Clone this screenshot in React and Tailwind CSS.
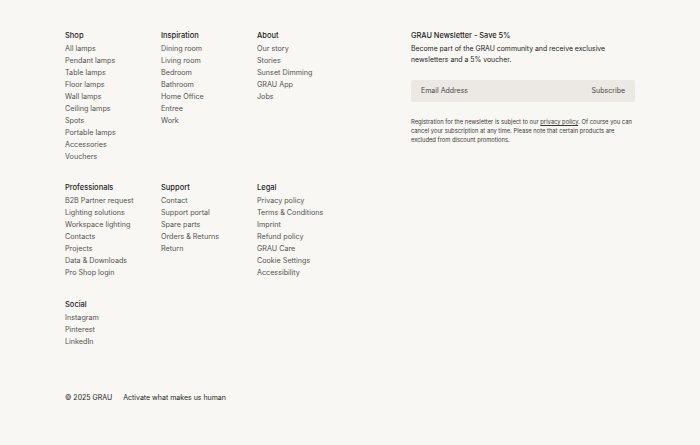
import React from "react";

const sections = [
  [
    {
      title: "Shop",
      links: [
        "All lamps",
        "Pendant lamps",
        "Table lamps",
        "Floor lamps",
        "Wall lamps",
        "Ceiling lamps",
        "Spots",
        "Portable lamps",
        "Accessories",
        "Vouchers",
      ],
    },
    {
      title: "Inspiration",
      links: ["Dining room", "Living room", "Bedroom", "Bathroom", "Home Office", "Entree", "Work"],
    },
    {
      title: "About",
      links: ["Our story", "Stories", "Sunset Dimming", "GRAU App", "Jobs"],
    },
  ],
  [
    {
      title: "Professionals",
      links: [
        "B2B Partner request",
        "Lighting solutions",
        "Workspace lighting",
        "Contacts",
        "Projects",
        "Data & Downloads",
        "Pro Shop login",
      ],
    },
    {
      title: "Support",
      links: ["Contact", "Support portal", "Spare parts", "Orders & Returns", "Return"],
    },
    {
      title: "Legal",
      links: [
        "Privacy policy",
        "Terms & Conditions",
        "Imprint",
        "Refund policy",
        "GRAU Care",
        "Cookie Settings",
        "Accessibility",
      ],
    },
  ],
  [
    {
      title: "Social",
      links: ["Instagram", "Pinterest", "LinkedIn"],
    },
  ],
];

function LinkColumn({ title, links }) {
  return (
    <div className="flex flex-col">
      <h3 className="text-[7.5px] leading-[12px] font-medium text-[#1d1d1b] mb-px">{title}</h3>
      <ul className="flex flex-col">
        {links.map((l) => (
          <li key={l} className="text-[7.2px] leading-[12px] text-[#555350]">
            <a href="#">{l}</a>
          </li>
        ))}
      </ul>
    </div>
  );
}

export default function App() {
  return (
    <footer
      className="min-h-screen w-full bg-[#f8f7f3] px-[65px] pt-[30px]"
      style={{ fontFamily: "Inter, 'Noto Sans', sans-serif" }}
    >
      <div className="flex">
        {/* LINK GROUPS */}
        <div className="flex flex-col gap-[19px] w-[288px]">
          {sections.map((row, i) => (
            <div key={i} className={`grid grid-cols-3 ${i === 2 ? "mt-px" : ""}`}>
              {row.map((col) => (
                <LinkColumn key={col.title} {...col} />
              ))}
            </div>
          ))}
        </div>

        {/* NEWSLETTER */}
        <div className="ml-[58px] w-[224px] flex flex-col">
          <h3 className="text-[7.4px] leading-[12px] font-medium text-[#1d1d1b]">
            GRAU Newsletter - Save 5%
          </h3>
          <p className="text-[6.9px] leading-[11px] text-[#1d1d1b] mt-px">
            Become part of the GRAU community and receive exclusive newsletters and a 5% voucher.
          </p>
          <form className="mt-[15px] flex items-center justify-between h-[22px] bg-[#ece8e4] rounded-[2px] px-[10px]">
            <input
              type="email"
              placeholder="Email Address"
              className="bg-transparent outline-none text-[7px] text-[#3b3937] placeholder:text-[#4a4845] w-[120px]"
            />
            <button type="button" className="text-[7px] text-[#4a4845]">
              Subscribe
            </button>
          </form>
          <p className="text-[5.8px] leading-[9px] text-[#3b3937] mt-[15px]">
            Registration for the newsletter is subject to our{" "}
            <a href="#" className="underline">
              privacy policy
            </a>
            . Of course you can cancel your subscription at any time. Please note that certain products are
            excluded from discount promotions.
          </p>
        </div>
      </div>

      {/* BOTTOM */}
      <div className="flex gap-[11px] mt-[44px] text-[7px] leading-[12px] text-[#1d1d1b]">
        <span>© 2025 GRAU</span>
        <span>Activate what makes us human</span>
      </div>
    </footer>
  );
}
